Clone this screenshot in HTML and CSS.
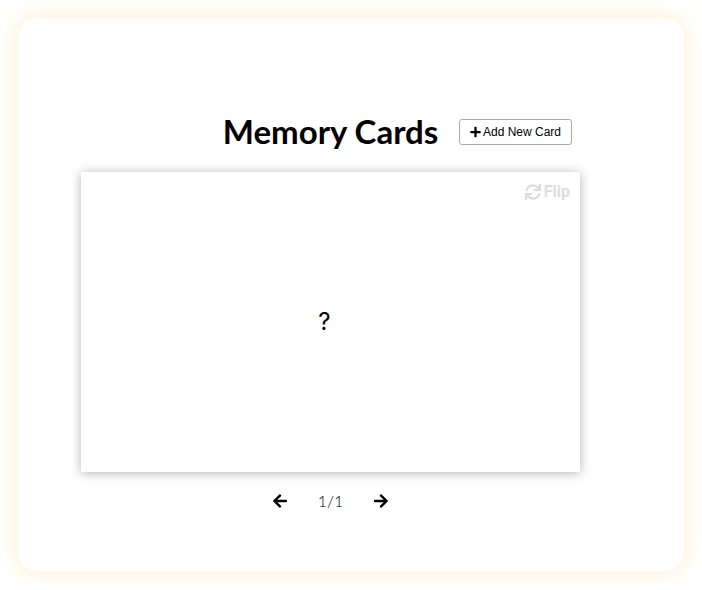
FILE: index.html
```html
<!DOCTYPE html>
<html lang="en">
<head>
<meta charset="utf-8">
<meta name="viewport" content="width=device-width, initial-scale=1">
<title>Memory Cards</title>
<link rel="stylesheet" href="styles.css">
</head>
<body>
<main class="panel">
  <header class="header">
    <h1 class="title">Memory Cards</h1>
    <button class="add" type="button">
      <svg class="icon-plus" viewBox="0 0 448 512" aria-hidden="true"><path d="M416 208H272V64c0-17.67-14.33-32-32-32h-32c-17.67 0-32 14.33-32 32v144H32c-17.67 0-32 14.33-32 32v32c0 17.67 14.33 32 32 32h144v144c0 17.67 14.33 32 32 32h32c17.67 0 32-14.33 32-32V304h144c17.67 0 32-14.33 32-32v-32c0-17.67-14.33-32-32-32z"/></svg>
      Add New Card
    </button>
  </header>
  <section class="card">
    <button class="flip" type="button">
      <svg class="icon-flip" viewBox="0 0 512 512" aria-hidden="true"><path d="M440.65 12.57l4 82.77A247.16 247.16 0 0 0 255.83 8C134.73 8 33.91 94.92 12.29 209.82A12 12 0 0 0 24.09 224h49.05a12 12 0 0 0 11.67-9.26 175.91 175.91 0 0 1 317-56.94l-101.46-4.86a12 12 0 0 0-12.57 12v47.41a12 12 0 0 0 12 12H500a12 12 0 0 0 12-12V12a12 12 0 0 0-12-12h-47.37a12 12 0 0 0-11.98 12.57zM255.83 432a175.61 175.61 0 0 1-146-77.8l101.8 4.87a12 12 0 0 0 12.57-12v-47.4a12 12 0 0 0-12-12H12a12 12 0 0 0-12 12V500a12 12 0 0 0 12 12h47.35a12 12 0 0 0 12-12.6l-4.15-82.57A247.17 247.17 0 0 0 255.83 504c121.11 0 221.93-86.92 243.55-201.82a12 12 0 0 0-11.8-14.18h-49.05a12 12 0 0 0-11.67 9.26A175.86 175.86 0 0 1 255.83 432z"/></svg>
      Flip
    </button>
    <p class="question">?</p>
  </section>
  <nav class="pager" aria-label="Cards">
    <button class="step" type="button" aria-label="Previous card">
      <svg class="icon-arrow" viewBox="0 0 448 512" aria-hidden="true"><path d="M257.5 445.1l-22.2 22.2c-9.4 9.4-24.6 9.4-33.9 0L7 273c-9.4-9.4-9.4-24.6 0-33.9L201.4 44.7c9.4-9.4 24.6-9.4 33.9 0l22.2 22.2c9.5 9.5 9.3 25-.4 34.3L136.6 216H424c13.3 0 24 10.7 24 24v32c0 13.3-10.7 24-24 24H136.6l120.5 114.8c9.8 9.3 10 24.8.4 34.3z"/></svg>
    </button>
    <span class="count">1/1</span>
    <button class="step" type="button" aria-label="Next card">
      <svg class="icon-arrow" viewBox="0 0 448 512" aria-hidden="true"><path d="M190.5 66.9l22.2-22.2c9.4-9.4 24.6-9.4 33.9 0L441 239c9.4 9.4 9.4 24.6 0 33.9L246.6 467.3c-9.4 9.4-24.6 9.4-33.9 0l-22.2-22.2c-9.5-9.5-9.3-25 .4-34.3L311.4 296H24c-13.3 0-24-10.7-24-24v-32c0-13.3 10.7-24 24-24h287.4L190.9 101.2c-9.8-9.3-10-24.8-.4-34.3z"/></svg>
    </button>
  </nav>
</main>
</body>
</html>
```
FILE: styles.css
```css
* {
  box-sizing: border-box;
}

body {
  margin: 0;
  padding: 18px;
  background: #fff;
  color: #000;
  font-family: Lato, sans-serif;
}

svg {
  display: block;
  fill: currentColor;
}

.panel {
  padding: 94px 104px 58px 63px;
  border-radius: 20px;
  background: #fff;
  box-shadow: 0 0 20px 4px #fff4dc;
}

.header {
  display: grid;
  grid-template-columns: 1fr auto 1fr;
  align-items: center;
  height: 40px;
}

.title {
  grid-column: 2;
  align-self: start;
  margin: 0;
  font-size: 33px;
  font-weight: 700;
  line-height: 38px;
}

.add {
  display: flex;
  align-items: center;
  justify-self: end;
  gap: 2px;
  height: 26px;
  margin-right: 8px;
  padding: 0 10px;
  border: 1px solid #aaa;
  border-radius: 3px;
  background: #fff;
  color: #000;
  font: 12px "Liberation Sans", sans-serif;
  white-space: nowrap;
}

.icon-plus {
  width: 11px;
  height: 12px;
}

.card {
  position: relative;
  display: grid;
  place-items: center;
  height: 300px;
  margin-top: 20px;
  background: #fff;
  box-shadow: 0 1px 10px rgba(0, 0, 0, 0.3);
}

.flip {
  position: absolute;
  top: 10px;
  right: 10px;
  display: flex;
  align-items: center;
  gap: 3px;
  padding: 0;
  border: 0;
  background: none;
  color: #ddd;
  font: 700 16px/20px Roboto, sans-serif;
}

.icon-flip {
  width: 16px;
  height: 16px;
}

.question {
  margin: 0;
  padding-right: 12px;
  font-family: Inter, sans-serif;
  font-size: 24px;
  line-height: 30px;
}

.pager {
  display: flex;
  align-items: center;
  justify-content: center;
  gap: 30px;
  margin-top: 17px;
}

.step {
  padding: 0;
  border: 0;
  background: none;
  color: #000;
}

.icon-arrow {
  width: 16px;
  height: 16px;
}

.count {
  font-size: 16px;
  font-weight: 300;
  line-height: 24px;
}
```
